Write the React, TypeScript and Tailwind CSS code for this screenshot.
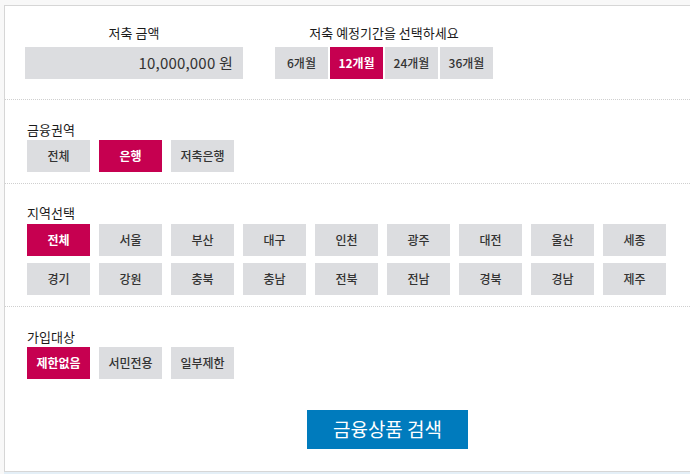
import { useState } from "react";

const periods = ["6개월", "12개월", "24개월", "36개월"];
const sectors = ["전체", "은행", "저축은행"];
const regions = [
  "전체", "서울", "부산", "대구", "인천", "광주", "대전", "울산", "세종",
  "경기", "강원", "충북", "충남", "전북", "전남", "경북", "경남", "제주"
];
const targets = ["제한없음", "서민전용", "일부제한"];

const font = { fontFamily: '"Noto Sans CJK KR", "Noto Sans", sans-serif' };

function Chip({
  label,
  active,
  onClick,
  wide = true
}: {
  label: string;
  active: boolean;
  onClick: () => void;
  wide?: boolean;
}) {
  return (
    <button
      onClick={onClick}
      className={`flex h-[32px] items-center justify-center text-[12px] ${
        wide ? "w-[63px]" : "w-[53px]"
      } ${active ? "bg-[#c60050] font-semibold text-white" : "bg-[#dcdde0] font-medium text-[#333]"}`}
    >
      {label}
    </button>
  );
}

export default function App() {
  const [period, setPeriod] = useState("12개월");
  const [sector, setSector] = useState("은행");
  const [region, setRegion] = useState("전체");
  const [target, setTarget] = useState("제한없음");

  return (
    <div className="h-[474px] w-[694px] bg-white" style={font}>
      <div className="w-[690px] bg-[#f8f8f8] pl-[4px] pt-[5px]">
        <div className="h-[467px] border-b border-l border-t border-[#d6d6d6] bg-white text-[#1a1a1a]">
          {/* 저축 금액 / 기간 */}
          <div className="flex gap-[32px] border-b border-dotted border-[#cfcfcf] pb-[20px] pl-[20px] pt-[18px]">
            <div className="w-[218px]">
              <p className="text-center text-[13px] leading-[18px]">저축 금액</p>
              <div className="mt-[5px] flex h-[32px] items-center justify-end bg-[#dcdde0] pr-[10px] text-[15px] tracking-[0.2px] text-[#333]">
                10,000,000 원
              </div>
            </div>
            <div>
              <p className="text-center text-[13px] leading-[18px]">저축 예정기간을 선택하세요</p>
              <div className="mt-[5px] flex gap-[2px]">
                {periods.map((p) => (
                  <Chip key={p} label={p} wide={false} active={period === p} onClick={() => setPeriod(p)} />
                ))}
              </div>
            </div>
          </div>

          {/* 금융권역 */}
          <div className="border-b border-dotted border-[#cfcfcf] pb-[11px] pl-[22px] pt-[21px]">
            <p className="text-[13px] leading-[18px]">금융권역</p>
            <div className="mt-[1px] flex gap-[9px]">
              {sectors.map((s) => (
                <Chip key={s} label={s} active={sector === s} onClick={() => setSector(s)} />
              ))}
            </div>
          </div>

          {/* 지역선택 */}
          <div className="border-b border-dotted border-[#cfcfcf] pb-[11px] pl-[22px] pt-[20px]">
            <p className="text-[13px] leading-[18px]">지역선택</p>
            <div className="mt-[2px] grid w-[639px] grid-cols-9 gap-x-[9px] gap-y-[7px]">
              {regions.map((r, i) => (
                <Chip
                  key={r + i}
                  label={r}
                  active={i === 0 && region === "전체"}
                  onClick={() => setRegion(r)}
                />
              ))}
            </div>
          </div>

          {/* 가입대상 */}
          <div className="pl-[22px] pt-[21px]">
            <p className="text-[13px] leading-[18px]">가입대상</p>
            <div className="mt-[1px] flex gap-[9px]">
              {targets.map((t) => (
                <Chip key={t} label={t} active={target === t} onClick={() => setTarget(t)} />
              ))}
            </div>
          </div>

          <div className="mt-[31px] flex pl-[302px]">
            <button className="h-[39px] w-[161px] bg-[#007bbd] text-[19px] text-white">
              금융상품 검색
            </button>
          </div>
        </div>
        <div className="h-[3px] bg-[#e4eff7]" />
      </div>
    </div>
  );
}
